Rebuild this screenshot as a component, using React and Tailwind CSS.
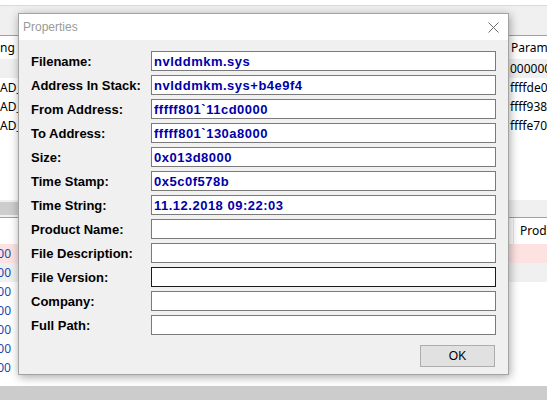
import React from 'react';

const fields = [
  { label: 'Filename:', value: 'nvlddmkm.sys' },
  { label: 'Address In Stack:', value: 'nvlddmkm.sys+b4e9f4' },
  { label: 'From Address:', value: 'fffff801`11cd0000' },
  { label: 'To Address:', value: 'fffff801`130a8000' },
  { label: 'Size:', value: '0x013d8000' },
  { label: 'Time Stamp:', value: '0x5c0f578b' },
  { label: 'Time String:', value: '11.12.2018 09:22:03' },
  { label: 'Product Name:', value: '' },
  { label: 'File Description:', value: '' },
  { label: 'File Version:', value: '', focused: true },
  { label: 'Company:', value: '' },
  { label: 'Full Path:', value: '' },
];

const topRows = [
  { left: '', right: '00000000`00000000', bg: 'bg-[#f0f0f0]' },
  { left: 'AD_', right: 'ffffde0d`5a3c0000', bg: 'bg-white' },
  { left: 'AD_', right: 'ffff9381`2e7f0000', bg: 'bg-white' },
  { left: 'AD_', right: 'ffffe70a`8c140000', bg: 'bg-white' },
];

const bottomRows = [
  { tail: 'fffff801`11cd0000', bg: 'bg-[#fde2e2]' },
  { tail: 'fffff801`130a8000', bg: 'bg-[#f0f0f0]' },
  { tail: 'fffff801`0f400000', bg: 'bg-white' },
  { tail: 'fffff801`0f600000', bg: 'bg-white' },
  { tail: 'fffff801`0fa00000', bg: 'bg-white' },
  { tail: 'fffff801`0fc00000', bg: 'bg-white' },
  { tail: 'fffff801`10000000', bg: 'bg-white', last: true },
];

const uiFont = { fontFamily: '"Noto Sans", "Open Sans", sans-serif' };
const sysFont = { fontFamily: '"Liberation Sans", Arial, sans-serif' };

function CloseIcon() {
  return (
    <svg width="11" height="11" viewBox="0 0 11 11" className="block">
      <path d="M0.5 0.5 L10.5 10.5 M10.5 0.5 L0.5 10.5" stroke="#6d6d6d" strokeWidth="1" fill="none" />
    </svg>
  );
}

function PropertiesDialog() {
  return (
    <div className="absolute left-[18px] top-[13px] w-[491px] h-[362px] border border-[#a3a3a3] bg-[#f0f0f0] shadow-[1px_2px_9px_rgba(0,0,0,0.35)] flex flex-col">
      {/* title bar */}
      <div className="h-[26px] bg-white flex items-center justify-between pl-[4px] pr-[9px]">
        <span className="text-[12px] text-[#9a9a9a]" style={sysFont}>
          Properties
        </span>
        <CloseIcon />
      </div>

      {/* fields */}
      <div className="flex flex-col gap-[4px] pt-[11px] pl-[12px]">
        {fields.map((f) => (
          <div key={f.label} className="flex items-center h-[20px]">
            <div className="w-[120px] text-[13px] font-bold text-black leading-none" style={sysFont}>
              {f.label}
            </div>
            <div
              className={`w-[345px] h-[20px] bg-white border flex items-center pl-[2px] ${
                f.focused ? 'border-[#1a1a1a]' : 'border-[#7a7a7a]'
              }`}
            >
              <span
                className="text-[13px] font-bold text-[#0000a8] tracking-[0.5px] leading-none whitespace-nowrap"
                style={sysFont}
              >
                {f.value}
              </span>
            </div>
          </div>
        ))}
      </div>

      {/* buttons */}
      <div className="flex justify-end pr-[13px] mt-[10px]">
        <button
          className="w-[75px] h-[22px] bg-[#e1e1e1] border border-[#adadad] text-[12px] text-black flex items-center justify-center"
          style={sysFont}
        >
          OK
        </button>
      </div>
    </div>
  );
}

export default function App() {
  return (
    <div className="relative w-[547px] h-[402px] overflow-hidden bg-white text-[12px] text-black" style={uiFont}>
      <div className="flex flex-col">
        {/* top strips */}
        <div className="h-[6px] bg-white border-b border-[#dadada]" />
        <div className="h-[30px] bg-[#f0f0f0] border-b border-[#a0a0a0]" />

        {/* upper list */}
        <div className="h-[23px] flex bg-white">
          <div className="w-[508px] flex items-center whitespace-nowrap overflow-hidden">ng</div>
          <div className="flex-1 flex items-center pl-[2px] border-l border-[#e5e5e5] whitespace-nowrap overflow-hidden">
            Parameters
          </div>
        </div>
        {topRows.map((r, i) => (
          <div key={i} className={`h-[19px] flex ${r.bg}`}>
            <div className="w-[508px] flex items-center whitespace-nowrap overflow-hidden">{r.left}</div>
            <div className="flex-1 flex items-center pl-[2px] whitespace-nowrap overflow-hidden">{r.right}</div>
          </div>
        ))}
        <div className="h-[65px] bg-white" />

        {/* scrollbar + splitter */}
        <div className="h-[18px] bg-[#f0f0f0] border-b border-[#a0a0a0] flex items-center">
          <div className="w-[60px] h-[13px] bg-[#cdcdcd]" />
        </div>

        {/* lower list */}
        <div className="h-[26px] flex bg-white">
          <div className="w-[513px]" />
          <div className="flex-1 flex items-center pl-[6px] border-l border-[#e5e5e5] whitespace-nowrap overflow-hidden">
            Product Name
          </div>
        </div>
        {bottomRows.map((r, i) => (
          <div key={i} className={`h-[19px] flex items-center whitespace-nowrap ${r.bg}`}>
            <div className="w-[11px] flex justify-end overflow-hidden text-[#1a4bb0]">
              <span>{r.tail}</span>
            </div>
            {r.last && (
              <div className="flex self-start pt-[7px] leading-none">
                <div className="w-[30px]" />
                <div className="w-[115px]">fffff801`0fa00000</div>
                <div className="w-[115px]">0x00a00000</div>
                <div className="w-[115px]">0x5c0f578b</div>
                <div className="w-[120px]">11.12.2018 09:22:03</div>
              </div>
            )}
          </div>
        ))}
        <div className="h-[9px] bg-white" />
        <div className="h-[14px] bg-[#cccccc]" />
        <div className="h-[2px] bg-white" />
      </div>

      <PropertiesDialog />
    </div>
  );
}
